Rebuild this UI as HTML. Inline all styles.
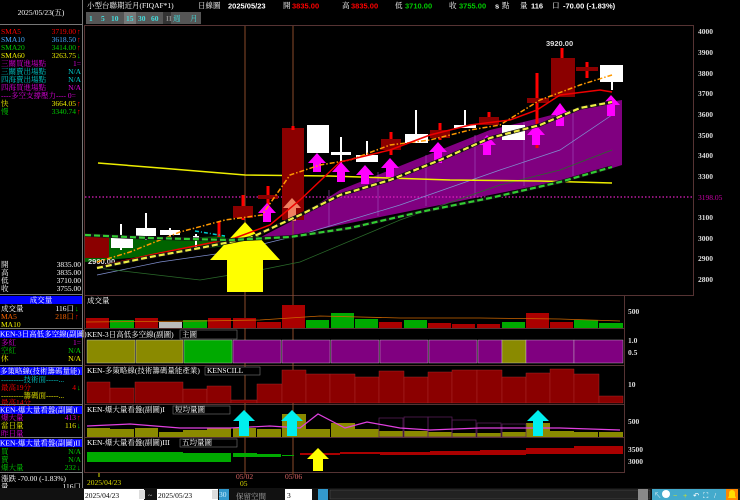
<!DOCTYPE html>
<html><head><meta charset="utf-8"><style>
html,body{margin:0;padding:0;background:#000;width:740px;height:500px;overflow:hidden}
svg{display:block}
text{font-family:"Liberation Serif","Noto Serif CJK SC",serif;font-size:7.5px}
.s{font-family:"Liberation Sans","Noto Sans CJK SC",sans-serif;font-weight:bold}
.ax{font-family:"Liberation Sans",sans-serif;font-weight:bold;font-size:7.5px;fill:#ddd}
</style></head><body>
<svg width="740" height="500" viewBox="0 0 740 500" xmlns="http://www.w3.org/2000/svg">
<rect width="740" height="500" fill="#000"/>
<!-- left panel -->
<line x1="82.5" y1="0" x2="82.5" y2="488" stroke="#777" stroke-width="1"/>
<line x1="0" y1="24.5" x2="82" y2="24.5" stroke="#777"/>
<text x="41" y="15" fill="#fff" text-anchor="middle" font-size="7">2025/05/23(五)</text>
<g font-size="7">
<text x="1" y="34" fill="#f00">SMA5</text><text x="76" y="34" fill="#f00" text-anchor="end">3719.00</text><text x="77" y="34" fill="#f00">↑</text>
<text x="1" y="42" fill="#4af">SMA10</text><text x="76" y="42" fill="#4af" text-anchor="end">3618.50</text><text x="77" y="42" fill="#f00">↑</text>
<text x="1" y="50" fill="#0c0">SMA20</text><text x="76" y="50" fill="#0c0" text-anchor="end">3414.00</text><text x="77" y="50" fill="#f00">↑</text>
<text x="1" y="58" fill="#ee0">SMA60</text><text x="76" y="58" fill="#ee0" text-anchor="end">3263.75</text><text x="77" y="58" fill="#0c0">↓</text>
<text x="1" y="66" fill="#d0d">三關買進場點</text><text x="81" y="66" fill="#d0d" text-anchor="end">1=</text>
<text x="1" y="74" fill="#0cc">三關賣出場點</text><text x="81" y="74" fill="#0cc" text-anchor="end">N/A</text>
<text x="1" y="82" fill="#0cc">四海賣出場點</text><text x="81" y="82" fill="#0cc" text-anchor="end">N/A</text>
<text x="1" y="90" fill="#d0d">四海買進場點</text><text x="81" y="90" fill="#d0d" text-anchor="end">N/A</text>
<text x="1" y="98" fill="#d0d">----多空支撐壓力---- 0=</text>
<text x="1" y="106" fill="#ee0">快</text><text x="76" y="106" fill="#ee0" text-anchor="end">3664.05</text><text x="77" y="106" fill="#f00">↑</text>
<text x="1" y="114" fill="#0c0">慢</text><text x="76" y="114" fill="#0c0" text-anchor="end">3340.74</text><text x="77" y="114" fill="#f00">↑</text>
<g fill="#fff">
<text x="1" y="267">開</text><text x="81" y="267" text-anchor="end">3835.00</text>
<text x="1" y="275">高</text><text x="81" y="275" text-anchor="end">3835.00</text>
<text x="1" y="283">低</text><text x="81" y="283" text-anchor="end">3710.00</text>
<text x="1" y="291">收</text><text x="81" y="291" text-anchor="end">3755.00</text>
</g>
<line x1="0" y1="294.5" x2="82" y2="294.5" stroke="#777"/>
<rect x="0" y="296" width="82" height="8" fill="#00f"/>
<text x="41" y="302.5" fill="#fff" text-anchor="middle">成交量</text>
<text x="1" y="311" fill="#fff">成交量</text><text x="74" y="311" fill="#fff" text-anchor="end">116口</text><text x="75" y="311" fill="#0c0">↓</text>
<text x="1" y="319" fill="#f60">MA5</text><text x="74" y="319" fill="#f60" text-anchor="end">218口</text><text x="75" y="319" fill="#f00">↑</text>
<text x="1" y="327" fill="#ee0">MA10</text>
<line x1="0" y1="328.5" x2="82" y2="328.5" stroke="#777"/>
<rect x="0" y="330" width="82" height="8" fill="#00f"/>
<text x="0" y="336.5" fill="#fff">KEN-3日高低多空線(副圖)</text>
<text x="1" y="345" fill="#d0d">多紅</text><text x="81" y="345" fill="#d0d" text-anchor="end">1=</text>
<text x="1" y="353" fill="#0c0">空紅</text><text x="81" y="353" fill="#0c0" text-anchor="end">N/A</text>
<text x="1" y="361" fill="#ee0">休</text><text x="81" y="361" fill="#ee0" text-anchor="end">N/A</text>
<line x1="0" y1="365.5" x2="82" y2="365.5" stroke="#777"/>
<rect x="0" y="367" width="82" height="8" fill="#00f"/>
<text x="0" y="373.5" fill="#fff">多策略線(技術籌碼量能)</text>
<text x="1" y="382" fill="#0cc">---------技術面-----...</text>
<text x="1" y="390" fill="#f00">最高19分</text><text x="76" y="390" fill="#f00" text-anchor="end">4</text><text x="77" y="390" fill="#0c0">↓</text>
<text x="1" y="398" fill="#ee0">---------籌碼面-----...</text>
<text x="1" y="405" fill="#f00">最高14分</text>
<line x1="0" y1="404.5" x2="82" y2="404.5" stroke="#777"/>
<rect x="0" y="406" width="82" height="8" fill="#00f"/>
<text x="0" y="412.5" fill="#fff">KEN-爆大量看盤(副圖)I</text>
<text x="1" y="420" fill="#d0d">爆大量</text><text x="76" y="420" fill="#d0d" text-anchor="end">413</text><text x="77" y="420" fill="#f00">↑</text>
<text x="1" y="428" fill="#ee0">當日量</text><text x="76" y="428" fill="#ee0" text-anchor="end">116</text><text x="77" y="428" fill="#0c0">↓</text>
<text x="1" y="436" fill="#d0d">昨日量</text>
<line x1="0" y1="437.5" x2="82" y2="437.5" stroke="#777"/>
<rect x="0" y="439" width="82" height="8" fill="#00f"/>
<text x="0" y="445.5" fill="#fff">KEN-爆大量看盤(副圖)II</text>
<text x="1" y="454" fill="#0c0">買</text><text x="81" y="454" fill="#0c0" text-anchor="end">N/A</text>
<text x="1" y="462" fill="#0c0">賣</text><text x="81" y="462" fill="#0c0" text-anchor="end">N/A</text>
<text x="1" y="470" fill="#0c0">爆大量</text><text x="76" y="470" fill="#0c0" text-anchor="end">232</text><text x="77" y="470" fill="#0c0">↓</text>
<line x1="0" y1="472.5" x2="82" y2="472.5" stroke="#777"/>
<text x="1" y="481" fill="#fff">漲跌   -70.00 (-1.83%)</text>
<text x="1" y="489" fill="#fff">量</text><text x="81" y="489" fill="#fff" text-anchor="end">116口</text>
</g>
<!-- header -->
<g font-size="7">
<text x="87" y="8" fill="#fff">小型台聯期近月(FIQAF*1)</text>
<text x="198" y="8" fill="#fff">日線圖</text>
<text x="228" y="8.5" fill="#fff" class="s" font-size="9">2025/05/23</text>
<text x="283" y="8" fill="#fff">開</text><text x="292" y="8.5" fill="#f00" class="s" font-size="9">3835.00</text>
<text x="342" y="8" fill="#fff">高</text><text x="351" y="8.5" fill="#f00" class="s" font-size="9">3835.00</text>
<text x="395" y="8" fill="#fff">低</text><text x="405" y="8.5" fill="#0c0" class="s" font-size="9">3710.00</text>
<text x="449" y="8" fill="#fff">收</text><text x="459" y="8.5" fill="#0c0" class="s" font-size="9">3755.00</text>
<text x="495" y="8.5" fill="#fff" class="s" font-size="8">s</text><text x="502" y="8" fill="#fff">點</text>
<text x="520" y="8" fill="#fff">量</text><text x="531" y="8.5" fill="#fff" class="s" font-size="9">116</text><text x="552" y="8" fill="#fff">口</text>
<text x="563" y="8.5" fill="#fff" class="s" font-size="9">-70.00 (-1.83%)</text>
</g>
<g font-size="7">
<rect x="86" y="12" width="77" height="12" fill="#555"/><rect x="163" y="12" width="8" height="12" fill="#333"/><rect x="171" y="12" width="30" height="12" fill="#555"/>
<rect x="124" y="12" width="12" height="12" fill="#777"/>
<g fill="#4dd" class="s" font-size="6.5"><text x="89" y="21">1</text><text x="101" y="21">5</text><text x="111" y="21">10</text><text x="126" y="21">15</text><text x="138" y="21">30</text><text x="151" y="21">60</text><text x="166" y="21" fill="#888">II</text></g>
<text x="173" y="21" fill="#4dd">週</text><text x="190" y="21" fill="#4dd">月</text>
</g>
<!-- panel frames -->
<g fill="none" stroke="#553333" stroke-width="1">
<rect x="84.5" y="25.5" width="609" height="270"/>
<rect x="84.5" y="295.5" width="540" height="33"/>
<rect x="84.5" y="328.5" width="540" height="37"/>
<rect x="84.5" y="365.5" width="540" height="39"/>
<rect x="84.5" y="404.5" width="540" height="33"/>
<rect x="84.5" y="437.5" width="540" height="35"/>
</g>
<line x1="693.5" y1="25" x2="693.5" y2="296" stroke="#553333"/>
<!-- axis labels -->
<g class="ax">
<text x="698" y="34">4000</text><text x="698" y="55">3900</text><text x="698" y="76">3800</text><text x="698" y="96">3700</text><text x="698" y="117">3600</text><text x="698" y="138">3500</text><text x="698" y="158">3400</text><text x="698" y="179">3300</text><text x="698" y="220">3100</text><text x="698" y="241">3000</text><text x="698" y="261">2900</text><text x="698" y="282">2800</text>
<text x="698" y="200" fill="#c0a" font-size="6" font-weight="normal">3198.05</text>
<text x="628" y="314">500</text><text x="628" y="343">1.0</text><text x="628" y="355">0.5</text><text x="628" y="387">10</text><text x="628" y="424">500</text><text x="628" y="452">3500</text><text x="628" y="464">3000</text>
</g>
<!-- main chart: purple fill -->
<polygon points="255,240 290,222 340,190 390,170 440,150 490,130 540,118 590,105 622,100 622,165 590,175 540,185 490,195 440,205 390,215 340,225 290,236 255,238" fill="#800080"/>
<g stroke="#a050c0" stroke-width="0.6"><line x1="329" y1="190" x2="329" y2="226"/><line x1="378" y1="172" x2="378" y2="216"/><line x1="426" y1="155" x2="426" y2="206"/><line x1="475" y1="135" x2="475" y2="196"/><line x1="524" y1="122" x2="524" y2="186"/><line x1="573" y1="110" x2="573" y2="176"/></g>
<!-- green base fill -->
<polygon points="85,235 130,238 180,238 225,236 225,246 180,252 130,258 85,262" fill="#006400"/>
<!-- vertical date lines -->
<line x1="245" y1="26" x2="245" y2="475" stroke="#8a4a2a" stroke-width="1"/>
<line x1="293" y1="26" x2="293" y2="475" stroke="#8a4a2a" stroke-width="1"/>
<!-- horizontal dotted -->
<line x1="85" y1="197" x2="693" y2="197" stroke="#e020c0" stroke-width="1.3" stroke-dasharray="1.5,2"/>
<!-- thin lines -->
<polyline points="97,275 160,262 230,252 300,235 400,205 500,170 560,150 612,115" fill="none" stroke="#8090d0" stroke-width="0.7"/>
<polyline points="97,268 200,280 260,270 300,262 400,220 500,185 560,170 612,150" fill="none" stroke="#2a6a2a" stroke-width="0.7"/>
<!-- yellow solid -->
<polyline points="98,163 160,168 245,175 330,176 450,180 540,181 612,183" fill="none" stroke="#ee0" stroke-width="1.5"/>
<!-- candles -->
<g>
<rect x="85" y="235" width="24" height="23" fill="#8b0000"/>
<line x1="121" y1="224" x2="121" y2="250" stroke="#fff" stroke-width="2"/><rect x="111" y="238" width="22" height="10" fill="#fff"/>
<line x1="146" y1="213" x2="146" y2="240" stroke="#fff" stroke-width="2"/><rect x="136" y="228" width="20" height="8" fill="#fff"/>
<line x1="170" y1="228" x2="170" y2="238" stroke="#fff" stroke-width="2"/><rect x="160" y="230" width="20" height="5" fill="#fff"/>
<line x1="196" y1="234" x2="196" y2="250" stroke="#fff" stroke-width="2"/><rect x="193" y="236" width="6" height="4" fill="#fff"/>
<line x1="219" y1="222" x2="219" y2="237" stroke="#f00" stroke-width="3"/>
<line x1="243" y1="195" x2="243" y2="220" stroke="#f00" stroke-width="3"/><rect x="233" y="206" width="20" height="12" fill="#8b0000"/>
<line x1="268" y1="186" x2="268" y2="220" stroke="#f00" stroke-width="3"/><rect x="258" y="195" width="20" height="4" fill="#8b0000"/>
<rect x="282" y="128" width="22" height="92" fill="#8b0000"/><line x1="293" y1="126" x2="293" y2="130" stroke="#f00" stroke-width="3"/>
<rect x="307" y="125" width="22" height="28" fill="#fff"/>
<line x1="341" y1="137" x2="341" y2="170" stroke="#fff" stroke-width="2"/><rect x="331" y="152" width="20" height="3" fill="#fff"/>
<line x1="367" y1="141" x2="367" y2="162" stroke="#fff" stroke-width="2"/><rect x="356" y="155" width="22" height="7" fill="#fff"/>
<line x1="391" y1="132" x2="391" y2="155" stroke="#f00" stroke-width="3"/><rect x="381" y="139" width="20" height="11" fill="#8b0000"/>
<line x1="416" y1="110" x2="416" y2="135" stroke="#fff" stroke-width="2"/><rect x="405" y="134" width="23" height="9" fill="#fff"/>
<line x1="440" y1="123" x2="440" y2="140" stroke="#f00" stroke-width="3"/><rect x="430" y="130" width="20" height="8" fill="#8b0000"/>
<line x1="465" y1="110" x2="465" y2="128" stroke="#fff" stroke-width="2"/><rect x="454" y="125" width="22" height="3" fill="#fff"/>
<line x1="489" y1="112" x2="489" y2="125" stroke="#f00" stroke-width="3"/><rect x="479" y="117" width="20" height="8" fill="#8b0000"/>
<rect x="502" y="125" width="23" height="15" fill="#fff"/>
<line x1="537" y1="73" x2="537" y2="148" stroke="#f00" stroke-width="3"/><rect x="527" y="98" width="22" height="5" fill="#8b0000"/>
<line x1="562" y1="48" x2="562" y2="60" stroke="#f00" stroke-width="3"/><rect x="551" y="58" width="24" height="39" fill="#8b0000"/>
<line x1="587" y1="62" x2="587" y2="78" stroke="#f00" stroke-width="3"/><rect x="576" y="67" width="22" height="4" fill="#8b0000"/>
<rect x="600" y="65" width="23" height="17" fill="#fff"/><line x1="612" y1="82" x2="612" y2="90" stroke="#fff" stroke-width="2"/>
</g>
<text x="546" y="46" class="ax" fill="#ddd">3920.00</text>
<text x="88" y="264" class="ax" fill="#ddd" font-size="7">2900.00</text>
<!-- arrows -->
<g fill="#ff00ff">
<path d="M258,213 l9,-10 l9,10 h-5 v9 h-8 v-9z"/>
<path d="M308,163 l9,-10 l9,10 h-5 v9 h-8 v-9z"/>
<path d="M332,172 l9,-10 l9,10 h-5 v10 h-8 v-10z"/>
<path d="M356,175 l9,-10 l9,10 h-5 v9 h-8 v-9z"/>
<path d="M381,168 l9,-10 l9,10 h-5 v9 h-8 v-9z"/>
<path d="M429,152 l9,-10 l9,10 h-5 v11 h-8 v-11z"/>
<path d="M478,145 l9,-10 l9,10 h-5 v10 h-8 v-10z"/>
<path d="M527,135 l9,-10 l9,10 h-5 v10 h-8 v-10z"/>
<path d="M551,115 l9,-12 l9,12 h-5 v11 h-8 v-11z"/>
<path d="M602,105 l9,-10 l9,10 h-5 v11 h-8 v-11z"/>
</g>
<path d="M283,208 l9,-10 l9,10 h-5 v13 h-8 v-13z" fill="#f08060"/>
<path d="M210,260 l35,-38 l35,38 h-17 v32 h-36 v-32z" fill="#ff0"/>
<!-- MA lines -->
<polyline points="97,262 130,252 180,232 225,220 262,215 290,175 320,165 350,160 390,145 430,140 470,130 500,125 540,100 580,85 612,75" fill="none" stroke="#f90" stroke-width="1.5" stroke-dasharray="5,2,1.5,2"/>
<polyline points="97,267 150,255 200,245 235,238 270,225 300,200 340,162 390,150 430,135 470,125 510,120 537,110 560,95 600,90 612,92" fill="none" stroke="#e00" stroke-width="1.5"/>
<polyline points="97,268 150,257 200,248 250,238 300,215 340,195 390,180 440,160 490,138 540,125 580,108 612,102" fill="none" stroke="#111" stroke-width="3.5"/>
<polyline points="97,268 150,257 200,248 250,238 300,215 340,195 390,180 440,160 490,138 540,125 580,108 612,102" fill="none" stroke="#ee4" stroke-width="2.2" stroke-dasharray="6,3"/>
<polyline points="85,235 150,238 230,240 290,237 350,228 420,212 490,198 560,182 612,167" fill="none" stroke="#111" stroke-width="3.5"/>
<polyline points="85,235 150,238 230,240 290,237 350,228 420,212 490,198 560,182 612,167" fill="none" stroke="#3c3" stroke-width="2.2" stroke-dasharray="6,3"/>
<polyline points="195,231 225,236" stroke="#0cc" stroke-width="1.5" stroke-dasharray="4,2,1,2" fill="none"/>
<!-- volume panel -->
<text x="87" y="303" fill="#fff" font-size="7">成交量</text>
<g>
<rect x="86" y="318" width="23" height="10" fill="#a00"/><rect x="110" y="320" width="24" height="8" fill="#0a0"/><rect x="135" y="318" width="23" height="10" fill="#a00"/><rect x="159" y="322" width="23" height="6" fill="#bbb"/><rect x="183" y="320" width="24" height="8" fill="#0a0"/><rect x="208" y="318" width="23" height="10" fill="#a00"/>
<rect x="233" y="318" width="23" height="10" fill="#a00"/><rect x="257" y="322" width="24" height="6" fill="#a00"/><rect x="282" y="305" width="23" height="23" fill="#a00"/><rect x="306" y="320" width="23" height="8" fill="#0a0"/><rect x="331" y="313" width="23" height="15" fill="#0a0"/><rect x="355" y="319" width="23" height="9" fill="#0a0"/><rect x="379" y="322" width="23" height="6" fill="#a00"/><rect x="404" y="320" width="23" height="8" fill="#0a0"/><rect x="428" y="323" width="23" height="5" fill="#a00"/><rect x="452" y="324" width="23" height="4" fill="#a00"/><rect x="477" y="324" width="23" height="4" fill="#a00"/><rect x="502" y="322" width="23" height="6" fill="#0a0"/><rect x="526" y="313" width="23" height="15" fill="#a00"/><rect x="550" y="322" width="23" height="6" fill="#a00"/><rect x="574" y="320" width="24" height="8" fill="#0a0"/><rect x="599" y="323" width="24" height="5" fill="#0a0"/>
</g>
<polyline points="86,322 200,321 260,320 320,316 400,318 480,318 560,319 620,321" fill="none" stroke="#c60" stroke-width="0.8"/>
<!-- KEN-3 panel -->
<text x="87" y="337" fill="#fff" font-size="7">KEN-3日高低多空線(副圖)</text>
<rect x="180" y="330" width="57" height="9" fill="#000" stroke="#777" stroke-width="0.6"/><text x="182" y="337" fill="#fff" font-size="6.5">主圖</text>
<g stroke="#ccc" stroke-width="0.4">
<rect x="87" y="340" width="48" height="23" fill="#8a8a00"/><rect x="136" y="340" width="47" height="23" fill="#8a8a00"/><rect x="184" y="340" width="48" height="23" fill="#0a0"/>
<rect x="233" y="340" width="48" height="23" fill="#800080"/><rect x="282" y="340" width="48" height="23" fill="#800080"/><rect x="331" y="340" width="48" height="23" fill="#800080"/><rect x="380" y="340" width="48" height="23" fill="#800080"/><rect x="429" y="340" width="48" height="23" fill="#800080"/><rect x="478" y="340" width="24" height="23" fill="#800080"/><rect x="502" y="340" width="24" height="23" fill="#8a8a00"/><rect x="526" y="340" width="48" height="23" fill="#800080"/><rect x="574" y="340" width="49" height="23" fill="#800080"/>
</g>
<!-- 多策 panel -->
<text x="87" y="373" fill="#fff" font-size="7">KEN-多策略線(技術籌碼量能產業)</text>
<rect x="205" y="367" width="55" height="8" fill="#000" stroke="#777" stroke-width="0.6"/><text x="207" y="373" fill="#fff" font-size="6.5">KENSCILL</text>
<g fill="#8b0000" stroke="#b03030" stroke-width="0.4">
<rect x="87" y="382" width="23" height="21"/><rect x="110" y="388" width="24" height="15"/><rect x="135" y="382" width="48" height="21"/><rect x="183" y="389" width="24" height="14"/><rect x="207" y="386" width="24" height="17"/><rect x="231" y="400" width="26" height="3"/><rect x="257" y="384" width="25" height="19"/><rect x="282" y="370" width="24" height="33"/><rect x="306" y="374" width="24" height="29"/><rect x="330" y="374" width="25" height="29"/><rect x="355" y="377" width="24" height="26"/><rect x="379" y="371" width="25" height="32"/><rect x="404" y="377" width="24" height="26"/><rect x="428" y="372" width="24" height="31"/><rect x="452" y="370" width="25" height="33"/><rect x="477" y="370" width="25" height="33"/><rect x="502" y="377" width="24" height="26"/><rect x="526" y="373" width="24" height="30"/><rect x="550" y="369" width="24" height="34"/><rect x="574" y="374" width="25" height="29"/><rect x="599" y="396" width="24" height="7"/>
</g>
<!-- 爆大量 I -->
<text x="87" y="412" fill="#fff" font-size="7">KEN-爆大量看盤(副圖)I</text>
<rect x="173" y="406" width="57" height="8" fill="#000" stroke="#777" stroke-width="0.6"/><text x="175" y="412" fill="#fff" font-size="6.5">短均量圖</text>
<g fill="#8a8a00">
<rect x="87" y="428" width="23" height="9"/><rect x="110" y="429" width="24" height="8"/><rect x="135" y="428" width="23" height="9"/><rect x="159" y="432" width="24" height="5"/><rect x="183" y="430" width="24" height="7"/><rect x="207" y="428" width="24" height="9"/><rect x="233" y="428" width="23" height="9"/><rect x="257" y="429" width="24" height="8"/><rect x="282" y="414" width="24" height="23"/><rect x="306" y="429" width="24" height="8"/><rect x="331" y="423" width="24" height="14"/><rect x="355" y="429" width="24" height="8"/><rect x="379" y="431" width="24" height="6"/><rect x="404" y="431" width="24" height="6"/><rect x="428" y="432" width="24" height="5"/><rect x="452" y="433" width="24" height="4"/><rect x="477" y="433" width="24" height="4"/><rect x="502" y="432" width="24" height="5"/><rect x="526" y="423" width="24" height="14"/><rect x="550" y="431" width="24" height="6"/><rect x="574" y="432" width="24" height="5"/><rect x="599" y="432" width="24" height="5"/>
</g>
<g fill="none" stroke="#602060" stroke-width="0.7"><rect x="379" y="418" width="24" height="19"/><rect x="404" y="417" width="24" height="20"/><rect x="428" y="417" width="24" height="20"/><rect x="452" y="420" width="24" height="17"/><rect x="477" y="423" width="24" height="14"/><rect x="502" y="424" width="24" height="13"/></g>
<polyline points="87,426 130,424 180,428 230,428 270,426 300,428 318,414 345,428 367,422 400,428 430,430 480,428 560,428 620,430" fill="none" stroke="#e040e0" stroke-width="1.2"/>
<g fill="#0ee">
<path d="M233,421 l11,-11 l11,11 h-6 v15 h-10 v-15z"/>
<path d="M281,421 l11,-11 l11,11 h-6 v15 h-10 v-15z"/>
<path d="M527,421 l11,-11 l11,11 h-6 v15 h-10 v-15z"/>
</g>
<!-- 爆大量 III -->
<text x="87" y="445" fill="#fff" font-size="7">KEN-爆大量看盤(副圖)III</text>
<rect x="180" y="439" width="57" height="8" fill="#000" stroke="#777" stroke-width="0.6"/><text x="182" y="445" fill="#fff" font-size="6.5">五均量圖</text>
<g fill="#0a0"><rect x="87" y="452" width="48" height="10"/><rect x="135" y="452" width="48" height="10"/><rect x="183" y="453" width="48" height="9"/><rect x="233" y="453" width="24" height="4"/><rect x="257" y="454" width="24" height="3"/><rect x="282" y="455" width="12" height="1"/></g>
<g fill="#a00"><rect x="300" y="453" width="40" height="2"/><rect x="340" y="452" width="40" height="2"/><rect x="380" y="452" width="50" height="3"/><rect x="430" y="451" width="50" height="4"/><rect x="480" y="450" width="46" height="5"/><rect x="526" y="448" width="48" height="6"/><rect x="574" y="446" width="49" height="8"/></g>
<path d="M307,459 l11,-11 l11,11 h-6 v12 h-10 v-12z" fill="#ff0"/>
<!-- dates -->
<text x="87" y="485" fill="#dd0" font-size="7">2025/04/23</text>
<line x1="99" y1="473" x2="99" y2="477" stroke="#dd0"/>
<text x="236" y="479" fill="#d66" font-size="6.5">05/02</text><text x="240" y="486" fill="#dd0" font-size="6.5">05</text>
<text x="285" y="479" fill="#d66" font-size="6.5">05/06</text>
<!-- bottom bar -->
<rect x="0" y="488" width="740" height="12" fill="#111"/>
<rect x="84" y="489" width="60" height="11" fill="#fff"/><rect x="139" y="490" width="6" height="9" fill="#ddd"/>
<text x="85" y="498" fill="#000" font-size="8">2025/04/23</text>
<text x="148" y="498" fill="#ddd" font-size="8">~</text>
<rect x="157" y="489" width="61" height="11" fill="#fff"/><rect x="212" y="490" width="6" height="9" fill="#ddd"/>
<text x="158" y="498" fill="#000" font-size="8">2025/05/23</text>
<rect x="219" y="489" width="10" height="11" fill="#39c"/><text x="219" y="497" fill="#cef" font-size="6">30</text>
<text x="236" y="499" fill="#aaa" font-size="10">保留空間</text>
<rect x="285" y="489" width="27" height="11" fill="#fff"/><text x="287" y="498" fill="#000" font-size="8">3</text>
<rect x="318" y="489" width="10" height="11" fill="#39c"/>
<rect x="330" y="490" width="320" height="9" fill="#222" stroke="#555" stroke-width="0.5"/>
<rect x="638" y="489" width="10" height="11" fill="#888"/>
<g fill="#4ac"><rect x="652" y="489" width="86" height="11"/></g>
<g font-size="8" fill="#fff"><text x="654" y="498">↖</text><circle cx="666" cy="494" r="4" fill="#fff"/><text x="673" y="498" fill="#ee0">−</text><text x="683" y="498" fill="#ee0">+</text><text x="693" y="498">↶</text><text x="703" y="498">⛶</text><text x="714" y="498">/</text></g>
<rect x="726" y="489" width="12" height="11" fill="#f80"/><path d="M728,498 h8 l-1,-2 v-3 a3,3 0 0 0 -6,0 v3z" fill="#fd0"/>
</svg>
</body></html>
